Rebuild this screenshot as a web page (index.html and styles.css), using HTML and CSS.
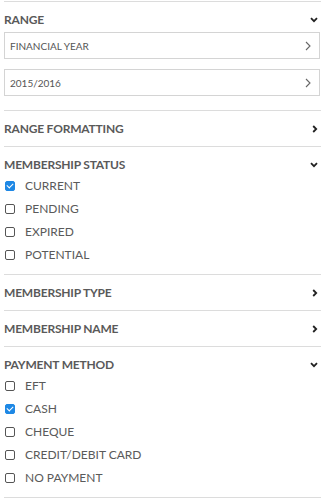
FILE: index.html
```html
<!DOCTYPE html>
<html lang="en">
<head>
    <meta charset="UTF-8">
    <meta name="viewport" content="width=device-width, initial-scale=1.0">
    <title>Filters</title>
    <link rel="stylesheet" href="styles.css">
</head>
<body>
    <div class="filters">
        <section class="filter open range">
            <div class="filter-head">
                <span>RANGE</span>
                <svg class="chev" width="8" height="6" viewBox="0 0 8 6"><path d="M1 1.2l3 3 3-3" fill="none" stroke="currentColor" stroke-width="1.8"/></svg>
            </div>
            <div class="select-box">
                <span>FINANCIAL YEAR</span>
                <svg width="6" height="10" viewBox="0 0 6 10"><path d="M1 1l4 4-4 4" fill="none" stroke="currentColor" stroke-width="1.1"/></svg>
            </div>
            <div class="select-box">
                <span>2015/2016</span>
                <svg width="6" height="10" viewBox="0 0 6 10"><path d="M1 1l4 4-4 4" fill="none" stroke="currentColor" stroke-width="1.1"/></svg>
            </div>
        </section>

        <section class="filter">
            <div class="filter-head">
                <span>RANGE FORMATTING</span>
                <svg class="chev" width="6" height="8" viewBox="0 0 6 8"><path d="M1.2 1l3 3-3 3" fill="none" stroke="currentColor" stroke-width="1.8"/></svg>
            </div>
        </section>

        <section class="filter open">
            <div class="filter-head">
                <span>MEMBERSHIP STATUS</span>
                <svg class="chev" width="8" height="6" viewBox="0 0 8 6"><path d="M1 1.2l3 3 3-3" fill="none" stroke="currentColor" stroke-width="1.8"/></svg>
            </div>
            <label class="option"><span class="box checked"></span>CURRENT</label>
            <label class="option"><span class="box"></span>PENDING</label>
            <label class="option"><span class="box"></span>EXPIRED</label>
            <label class="option"><span class="box"></span>POTENTIAL</label>
        </section>

        <section class="filter">
            <div class="filter-head">
                <span>MEMBERSHIP TYPE</span>
                <svg class="chev" width="6" height="8" viewBox="0 0 6 8"><path d="M1.2 1l3 3-3 3" fill="none" stroke="currentColor" stroke-width="1.8"/></svg>
            </div>
        </section>

        <section class="filter">
            <div class="filter-head">
                <span>MEMBERSHIP NAME</span>
                <svg class="chev" width="6" height="8" viewBox="0 0 6 8"><path d="M1.2 1l3 3-3 3" fill="none" stroke="currentColor" stroke-width="1.8"/></svg>
            </div>
        </section>

        <section class="filter open last">
            <div class="filter-head">
                <span>PAYMENT METHOD</span>
                <svg class="chev" width="8" height="6" viewBox="0 0 8 6"><path d="M1 1.2l3 3 3-3" fill="none" stroke="currentColor" stroke-width="1.8"/></svg>
            </div>
            <label class="option"><span class="box"></span>EFT</label>
            <label class="option"><span class="box checked"></span>CASH</label>
            <label class="option"><span class="box"></span>CHEQUE</label>
            <label class="option"><span class="box"></span>CREDIT/DEBIT CARD</label>
            <label class="option"><span class="box"></span>NO PAYMENT</label>
        </section>
    </div>
</body>
</html>
```

FILE: styles.css
```css
* {
    box-sizing: border-box;
    margin: 0;
    padding: 0;
}

body {
    font-family: 'Lato', 'Open Sans', sans-serif;
    background: #ffffff;
    color: #555555;
}

.filters {
    margin: 1px 8px 0 4px;
}

.filter {
    border-top: 1px solid #dcdcdc;
    padding-bottom: 8px;
}

.filter.last {
    border-bottom: 1px solid #dcdcdc;
}

.filter-head {
    display: flex;
    justify-content: space-between;
    align-items: center;
    padding: 10px 3px 1px 0;
    font-size: 12px;
    line-height: 16px;
    font-weight: 700;
    letter-spacing: -0.2px;
    color: #5a5a5a;
}

.chev {
    color: #222222;
    display: block;
}

.range {
    padding-bottom: 14px;
}

.select-box {
    display: flex;
    justify-content: space-between;
    align-items: center;
    height: 27px;
    margin: 3px 1px 0 0;
    padding: 0 8px 0 5px;
    border: 1px solid #d4d4d4;
    font-size: 10px;
    color: #555555;
}

.select-box + .select-box {
    margin-top: 10px;
}

.select-box svg {
    color: #666666;
    display: block;
}

.option {
    display: flex;
    align-items: center;
    height: 23px;
    padding-left: 1px;
    font-size: 12px;
    color: #5a5a5a;
    cursor: pointer;
}

.box {
    width: 10px;
    height: 10px;
    margin-right: 10px;
    border: 1.5px solid #555555;
    border-radius: 2px;
    position: relative;
}

.box.checked {
    background: #1e88e5;
    border-color: #1e88e5;
}

.box.checked::after {
    content: "";
    position: absolute;
    left: 2px;
    top: 0px;
    width: 3px;
    height: 5px;
    border: solid #ffffff;
    border-width: 0 1.6px 1.6px 0;
    transform: rotate(45deg);
}
```
